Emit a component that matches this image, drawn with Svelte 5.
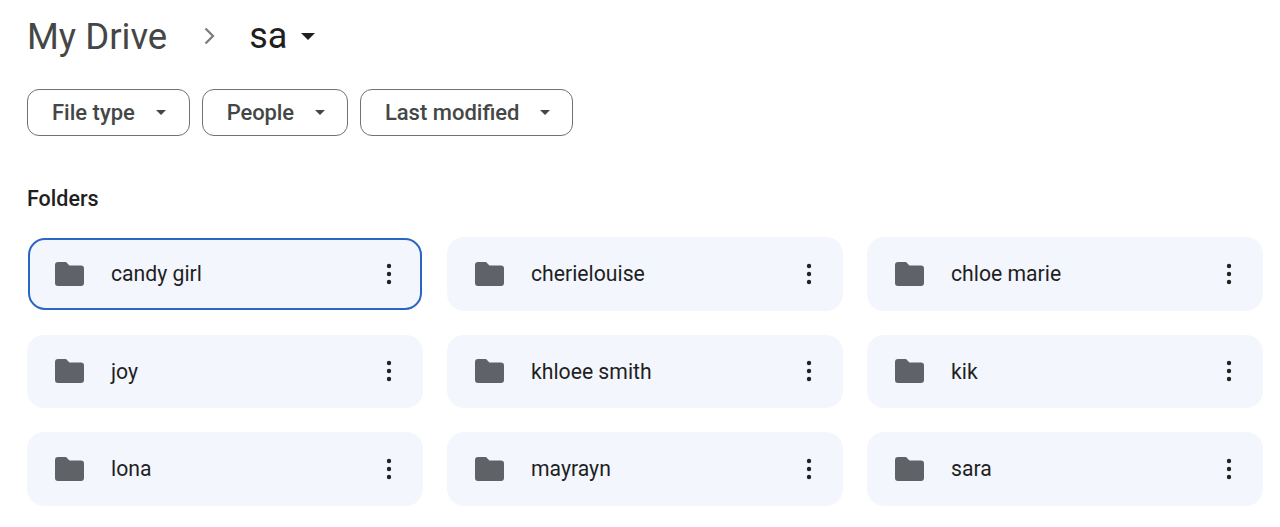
<script>
  const filters = ["File type", "People", "Last modified"];
  const folders = [
    "candy girl",
    "cherielouise",
    "chloe marie",
    "joy",
    "khloee smith",
    "kik",
    "lona",
    "mayrayn",
    "sara"
  ];
</script>

<div class="page">
  <div class="crumbs">
    <span class="root">My Drive</span>
    <svg class="chev" width="16" height="20" viewBox="0 0 16 20"><path d="M3.5 2.5 L11 10 L3.5 17.5" fill="none" stroke="#7a7a7d" stroke-width="2.2" /></svg>
    <span class="current">sa</span>
    <span class="caret big"></span>
  </div>

  <div class="filters">
    {#each filters as f}
      <button class="chip">{f}<span class="caret"></span></button>
    {/each}
  </div>

  <h2>Folders</h2>

  <div class="grid">
    {#each folders as name, i}
      <div class="card" class:selected={i == 0}>
        <svg class="folder" width="29" height="24" viewBox="0 0 29 24">
          <path d="M3 0 H11 L14.5 3.6 H26 A3 3 0 0 1 29 6.6 V21 A3 3 0 0 1 26 24 H3 A3 3 0 0 1 0 21 V3 A3 3 0 0 1 3 0 Z" fill="#5f6368" />
        </svg>
        <span class="name">{name}</span>
        <svg class="more" width="6" height="24" viewBox="0 0 6 24">
          <circle cx="3" cy="4" r="2.2" fill="#222" />
          <circle cx="3" cy="12" r="2.2" fill="#222" />
          <circle cx="3" cy="20" r="2.2" fill="#222" />
        </svg>
      </div>
    {/each}
  </div>
</div>

<style>
  :global(body) {
    background: #fff;
    font-family: Roboto, "Liberation Sans", sans-serif;
  }

  .page {
    height: 527px;
    overflow: hidden;
    padding: 0 16px 0 27px;
    box-sizing: border-box;
  }

  .crumbs {
    display: flex;
    align-items: center;
    height: 72px;
  }

  .root {
    font-size: 36.5px;
    color: #444746;
  }

  .chev {
    margin-left: 35px;
  }

  .current {
    font-size: 36px;
    color: #1f1f1f;
    margin-left: 31px;
  }

  .caret {
    display: inline-block;
    width: 0;
    height: 0;
    margin-left: 21px;
    border-left: 5.5px solid transparent;
    border-right: 5.5px solid transparent;
    border-top: 5px solid #444746;
  }

  .caret.big {
    margin-left: 14px;
    border-left-width: 7.5px;
    border-right-width: 7.5px;
    border-top: 7px solid #1f1f1f;
  }

  .filters {
    display: flex;
    gap: 12px;
    margin-top: 17px;
  }

  .chip {
    display: flex;
    align-items: center;
    height: 47px;
    padding: 0 22px 0 24px;
    background: #fff;
    border: 1px solid #717174;
    border-radius: 12px;
    font: 500 22px Roboto, "Liberation Sans", sans-serif;
    color: #444746;
  }

  .chip:first-child {
    padding-right: 23px;
  }

  .chip:nth-child(2) {
    letter-spacing: -0.15px;
  }

  h2 {
    margin: 49px 0 0;
    height: 28px;
    line-height: 28px;
    font-size: 21.5px;
    font-weight: 500;
    color: #1f1f1f;
  }

  .grid {
    display: grid;
    grid-template-columns: repeat(3, 396px);
    grid-auto-rows: 73.5px;
    gap: 24px;
    margin-top: 24px;
  }

  .card {
    display: flex;
    align-items: center;
    padding: 0 31px 0 28px;
    background: #f3f6fd;
    border-radius: 17px;
    box-sizing: border-box;
  }

  .card.selected {
    margin: 1px;
    border: 2px solid #2a66c4;
    padding: 0 28px 0 25px;
  }

  .name {
    flex: 1;
    margin-left: 27px;
    font-size: 21.2px;
    color: #1f1f1f;
  }
</style>
